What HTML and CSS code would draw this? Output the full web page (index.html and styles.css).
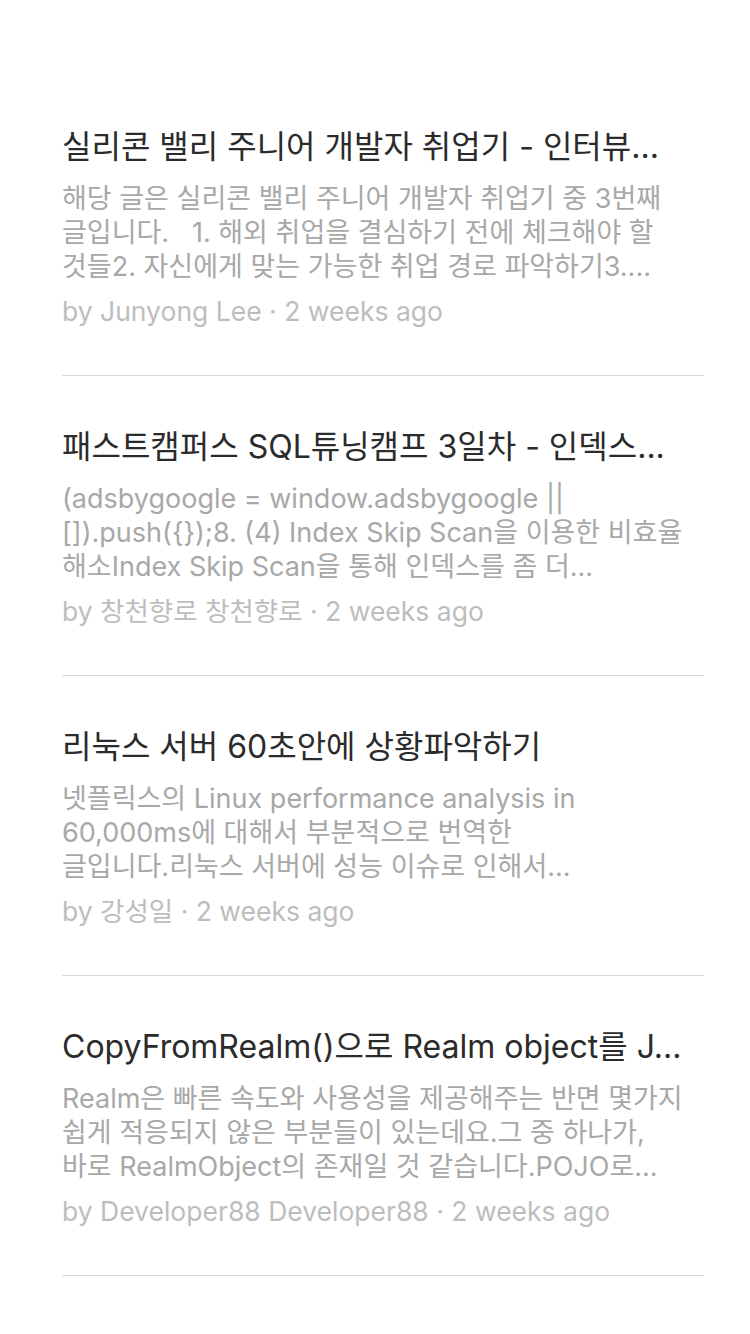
FILE: index.html
```html
<!DOCTYPE html>
<html lang="ko">
<head>
<meta charset="utf-8">
<link rel="stylesheet" href="styles.css">
</head>
<body>
<main class="list">
  <article class="item">
    <h2 class="title">실리콘 밸리 주니어 개발자 취업기 - 인터뷰...</h2>
    <div class="desc">
      <div class="line">해당 글은 실리콘 밸리 주니어 개발자 취업기 중 3번째</div>
      <div class="line">글입니다.   1. 해외 취업을 결심하기 전에 체크해야 할</div>
      <div class="line">것들2. 자신에게 맞는 가능한 취업 경로 파악하기3....</div>
    </div>
    <div class="meta">by Junyong Lee · 2 weeks ago</div>
  </article>
  <article class="item">
    <h2 class="title">패스트캠퍼스 SQL튜닝캠프 3일차 - 인덱스...</h2>
    <div class="desc">
      <div class="line">(adsbygoogle = window.adsbygoogle ||</div>
      <div class="line">[]).push({});8. (4) Index Skip Scan을 이용한 비효율</div>
      <div class="line">해소Index Skip Scan을 통해 인덱스를 좀 더...</div>
    </div>
    <div class="meta">by 창천향로 창천향로 · 2 weeks ago</div>
  </article>
  <article class="item">
    <h2 class="title">리눅스 서버 60초안에 상황파악하기</h2>
    <div class="desc">
      <div class="line">넷플릭스의 Linux performance analysis in</div>
      <div class="line">60,000ms에 대해서 부분적으로 번역한</div>
      <div class="line">글입니다.리눅스 서버에 성능 이슈로 인해서...</div>
    </div>
    <div class="meta">by 강성일 · 2 weeks ago</div>
  </article>
  <article class="item">
    <h2 class="title">CopyFromRealm()으로 Realm object를 J...</h2>
    <div class="desc">
      <div class="line">Realm은 빠른 속도와 사용성을 제공해주는 반면 몇가지</div>
      <div class="line">쉽게 적응되지 않은 부분들이 있는데요.그 중 하나가,</div>
      <div class="line">바로 RealmObject의 존재일 것 같습니다.POJO로...</div>
    </div>
    <div class="meta">by Developer88 Developer88 · 2 weeks ago</div>
  </article>
</main>
</body>
</html>
```

FILE: styles.css
```css
html, body {
  margin: 0;
  padding: 0;
  background: #ffffff;
}

body {
  font-family: Inter, "Noto Sans CJK KR", sans-serif;
  -webkit-font-smoothing: antialiased;
}

.list {
  padding: 76px 46px 0 62px;
}

.item {
  padding: 49px 0 47px;
  border-bottom: 1px solid #d9d9dd;
}

.title {
  margin: 0;
  font-size: 32px;
  line-height: 44px;
  font-weight: 400;
  color: #2b2b2b;
  white-space: nowrap;
}

.desc {
  margin-top: 13px;
  font-size: 27px;
  line-height: 34px;
  color: #a8a8a8;
}

.line {
  white-space: pre;
}

.meta {
  margin-top: 10px;
  font-size: 26.5px;
  line-height: 34px;
  color: #bdbdbd;
}
```
